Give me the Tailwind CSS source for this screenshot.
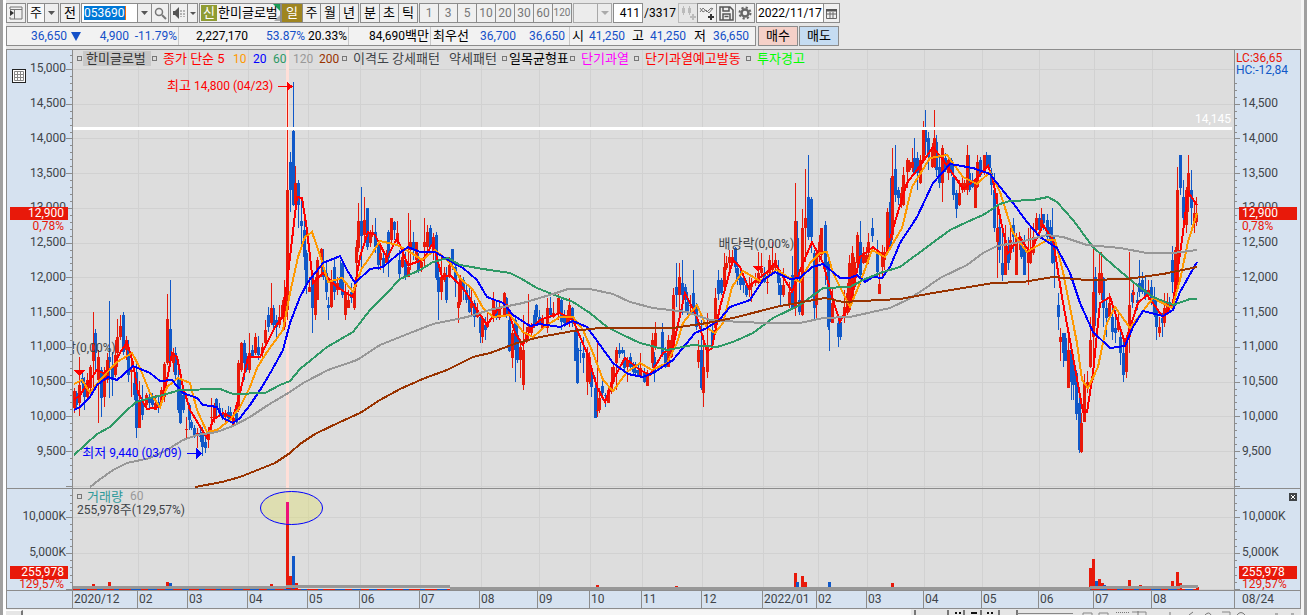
<!DOCTYPE html>
<html lang="ko">
<head>
<meta charset="utf-8">
<title>한미글로벌 차트</title>
<script src="https://cdn.jsdelivr.net/npm/@tailwindcss/browser@4"></script>
</head>
<body class="flex h-screen flex-col overflow-hidden border-l-3 border-r-3 border-[#a0a0a0] bg-[#e6e6e6] font-['Roboto','Noto_Sans_CJK_KR',sans-serif] text-[12px] leading-[18px] text-black">
<div class="flex min-h-0 flex-1 flex-col border-x-3 border-white border-r-[#f4f4f4]">

<!-- toolbar -->
<div class="mt-[3px] flex h-5 shrink-0 items-stretch whitespace-nowrap">
  <button aria-label="패널" class="mr-px flex w-[20px] items-center justify-center border border-[#8c8c8c] bg-[#f0f0f0]"><svg width="14" height="14" viewBox="0 0 14 14"><path d="M1 3V1h12v12H1v-2M1 3.500h12M5.500 4v9" fill="none" stroke="#777"/><path d="M1 4l4 3-4 3z" fill="#333"/></svg></button>
  <label class="mr-px flex w-[32px] border border-[#8c8c8c] bg-[#f8f8f8]"><select aria-label="종목 구분" class="w-4 appearance-none pl-[2px] text-[13px] leading-[18px]"><option>주</option></select><span class="flex flex-1 items-center justify-center border-l border-[#8c8c8c] bg-[#eee]"><svg width="7" height="4"><path d="M0 0h7L3.500 4z" fill="#555"/></svg></span></label>
  <button class="mr-px w-[20px] border border-[#8c8c8c] bg-[#f0f0f0] text-[13px]">전</button>
  <label class="flex w-[71px] border border-[#8c8c8c] bg-white"><span class="flex flex-1 items-center pl-[2px]"><input aria-label="종목코드" value="053690" class="h-[14px] w-[42px] border-r border-orange-500 bg-[#0078d7] text-white"></span><span class="flex w-[14px] items-center justify-center border-l border-[#8c8c8c] bg-[#eee]"><svg width="7" height="4"><path d="M0 0h7L3.500 4z" fill="#555"/></svg></span></label>
  <button aria-label="검색" class="mr-px flex w-[17px] items-center justify-center border border-l-0 border-[#8c8c8c] bg-[#f0f0f0]"><svg width="13" height="13" viewBox="0 0 13 13"><circle cx="5" cy="5" r="3.500" fill="none" stroke="#777" stroke-width="1.500"/><path d="M8 8l4 4" stroke="#777" stroke-width="2"/></svg></button>
  <button aria-label="소리" class="flex w-[18px] items-center justify-center border border-[#8c8c8c] bg-[#f0f0f0]"><svg width="14" height="12" viewBox="0 0 14 12"><path d="M1 4h2l4-4v12L3 8H1z" fill="#555"/><path d="M9 3v7M12 3v7" stroke="#777" stroke-dasharray="2 1"/></svg></button>
  <button aria-label="소리 메뉴" class="mr-px flex w-[10px] items-center justify-center border-y border-r border-[#8c8c8c] bg-[#f0f0f0]"><svg width="6" height="3"><path d="M0 0h6L3 3z" fill="#555"/></svg></button>
  <div class="flex w-[82px] items-center overflow-hidden border border-[#8c8c8c] bg-[#f2f2f2]"><span class="ml-px flex h-[16px] w-4 items-center justify-center bg-[#8f9c33] text-[13px] text-white">신</span><span class="relative flex-1 pl-px text-[13px]"><svg class="absolute right-0 top-0" width="7" height="17"><path d="M0 0h7v7z" fill="#1a9c55"/><path d="M7 11v6H1z" fill="#aaa"/></svg><span class="relative">한미글로벌</span></span></div>
  <div class="mr-px flex border border-[#8c8c8c] bg-[#f0f0f0] text-[13px]"><button class="w-[20px] bg-[#9f8520] text-white">일</button><button class="w-[18px] border-l border-[#8c8c8c]">주</button><button class="w-[19px] border-l border-[#8c8c8c]">월</button><button class="w-[19px] border-l border-[#8c8c8c]">년</button></div>
  <div class="mr-px flex border border-[#8c8c8c] bg-[#f0f0f0] text-[13px]"><button class="w-[18px]">분</button><button class="w-[19px] border-l border-[#8c8c8c]">초</button><button class="w-[19px] border-l border-[#8c8c8c]">틱</button></div>
  <div class="mr-px flex border border-[#8c8c8c] bg-[#f0f0f0] text-[#777]"><button class="w-[18px]">1</button><button class="w-[19px] border-l border-[#8c8c8c]">3</button><button class="w-[19px] border-l border-[#8c8c8c]">5</button><button class="w-[19px] border-l border-[#8c8c8c]">10</button><button class="w-[19px] border-l border-[#8c8c8c]">20</button><button class="w-[19px] border-l border-[#8c8c8c]">30</button><button class="w-[19px] border-l border-[#8c8c8c]">60</button><button class="w-[19px] border-l border-[#8c8c8c] text-[10px]">120</button></div>
  <label class="mr-px flex w-[39px] border border-[#a8a8a8] bg-[#ececec]"><select aria-label="분 선택" disabled class="min-w-0 flex-1 appearance-none"><option></option></select><span class="flex w-[14px] items-center justify-center border-l border-[#a8a8a8]"><svg width="8" height="4"><path d="M0 0h8L4 4z" fill="#aaa"/></svg></span></label>
  <input aria-label="표시 개수" value="411" class="w-[30px] border border-[#8c8c8c] bg-white pr-[2px] text-right">
  <span class="flex w-[35px] items-center pl-px">/3317</span>
  <button aria-label="봉 추가" disabled class="flex w-[19px] items-center justify-center border border-r-0 border-[#bbb]"><svg width="16" height="16" viewBox="0 0 16 16"><path d="M3.500 1v9M9.500 1v9" stroke="#bbb"/><path d="M2 3h3v5H2zM8 3h3v5H8z" fill="#bbb"/><path d="M13 9v6M10 12h6" stroke="#bbb" stroke-width="2"/></svg></button>
  <button aria-label="지표 추가" class="flex w-[19px] items-center justify-center border border-r-0 border-[#8c8c8c] bg-[#f0f0f0]"><svg width="16" height="16" viewBox="0 0 16 16"><path d="M1 7l3-4 4 4 4-4 2 1M1 3l3 4 3-2 3 3 4-5" fill="none" stroke="#777"/><path d="M12 9v6M9 12h6" stroke="#333" stroke-width="2"/></svg></button>
  <button aria-label="저장" class="flex w-[19px] items-center justify-center border border-r-0 border-[#8c8c8c] bg-[#f0f0f0]"><svg width="15" height="15" viewBox="0 0 15 15"><path d="M1 1h10l3 3v10H1zM4 1v4h6V1M4 14V8h7v6M5.500 10.500h4" fill="none" stroke="#555" stroke-width="1.500"/></svg></button>
  <button aria-label="설정" class="mr-px flex w-[20px] items-center justify-center border border-[#8c8c8c] bg-[#f0f0f0]"><svg width="14" height="14" viewBox="0 0 14 14"><circle cx="7" cy="7" r="3.500" fill="none" stroke="#666" stroke-width="2.500"/><circle cx="7" cy="7" r="5.500" fill="none" stroke="#666" stroke-width="2" stroke-dasharray="2.200 2.120"/></svg></button>
  <label class="flex w-[84px] border border-[#8c8c8c] bg-white"><input aria-label="날짜" value="2022/11/17" class="w-[66px] min-w-0 pl-px"><span class="flex flex-1 items-center justify-center border-l border-[#8c8c8c] bg-[#f0f0f0]"><svg width="11" height="11" viewBox="0 0 11 11"><path d="M.5 1.500h10v9H.5zM.5 6h10M4 4v6M7 4v6" fill="none" stroke="#666"/><path d="M0 1h11v2.500H0z" fill="#555"/></svg></span></label>
</div>

<!-- quote row -->
<div class="mt-[3px] flex h-5 shrink-0 whitespace-nowrap text-[#1450c8]">
  <dl class="flex w-[750px] items-center border border-[#8c8c8c] bg-[#f2f2f2]">
    <dd class="w-[60px] text-right">36,650</dd><dd class="flex w-[17px] justify-center"><svg width="10" height="9"><path d="M0 0h10L5 9z" fill="#1450c8"/></svg></dd><dd class="w-[45px] text-right">4,900</dd><dd class="h-full w-[50px] border-r border-[#c8c8c8] pr-px text-right">-11.79%</dd>
    <dd class="w-[69px] text-right text-black">2,227,170</dd><dd class="w-[57px] text-right">53.87%</dd><dd class="h-full w-[44px] border-r border-[#c8c8c8] pr-px text-right text-black">20.33%</dd>
    <dd class="h-full w-[82px] border-r border-[#c8c8c8] pr-px text-right text-black">84,690<span class="text-[13px]">백만</span></dd>
    <dt class="w-[42px] pl-[2px] text-[13px] text-black">최우선</dt><dd class="w-[43px] text-right">36,700</dd><dd class="h-full w-[54px] border-r border-[#c8c8c8] pr-[4px] text-right">36,650</dd>
    <dt class="w-[19px] pl-[2px] text-[13px] text-black">시</dt><dd class="w-[40px]">41,250</dd><dt class="w-[20px] pl-[3px] text-[13px] text-black">고</dt><dd class="w-[40px] pl-px">41,250</dd><dt class="w-[20px] pl-[5px] text-[13px] text-black">저</dt><dd class="flex-1 pr-[6px] text-right">36,650</dd>
  </dl>
  <button class="ml-[2px] w-10 border border-[#8c8c8c] bg-[#f5d0c8] text-[13px] text-black">매수</button>
  <button class="ml-px w-10 border border-[#8c8c8c] bg-[#c5dcf2] text-[13px] text-black">매도</button>
</div>

<!-- chart -->
<main class="mt-[3px] grid min-h-0 flex-1 grid-cols-[66px_1fr_66px] grid-rows-[1fr_18px] border border-[#8c8c8c] bg-[#d6e2f0] text-[#404448]">
  <div class="relative grid min-h-0 grid-rows-[438fr_102fr] border-r border-[#8c8c8c]">
    <svg class="absolute inset-0 h-full w-full" viewBox="7 50 65 540" preserveAspectRatio="none"><path id="ticksL" stroke="#8c8c8c" fill="none"/></svg>
    <div id="priceL" class="flex flex-col items-end pb-[20px] pr-[6px] pt-px"></div>
    <div class="flex flex-col items-end border-t border-[#8c8c8c] pb-[20px] pr-[6px] pt-[9px]"><span class="flex flex-1 items-center">10,000K</span><span class="flex flex-1 items-center">5,000K</span></div>
    <button aria-label="표 보기" class="absolute left-[5px] top-[19px] flex size-[14px] items-center justify-center border border-[#222] bg-white"><svg width="10" height="10"><path d="M.5.500h9v9h-9zM.5 3.500h9M.5 6.500h9M3.500 0v10M6.500 0v10" fill="none" stroke="#888"/></svg></button>
    <div class="absolute left-[3px] top-[29.100%] h-[13px] w-[58px] bg-[#e8190a] pr-[4px] text-right leading-[13px] text-white">12,900</div>
    <div class="absolute right-[8px] top-[31.300%] leading-[14px] text-[#e8190a]">0,78%</div>
    <div class="absolute left-[3px] top-[95.500%] h-[13px] w-[58px] bg-[#e8190a] pr-[4px] text-right leading-[13px] text-white">255,978</div>
    <div class="absolute bottom-0 right-[8px] leading-[12px] text-[#e8190a]">129,57%</div>
  </div>

  <div class="relative min-h-0 overflow-hidden bg-[#dddddd]">
    <svg id="plot" class="absolute inset-0 h-full w-full" viewBox="73 50 1161 540" preserveAspectRatio="none" shape-rendering="crispEdges" fill="none">
      <path id="grid" stroke="#d1d1d1"/>
      <path d="M287.500 50V590" stroke="#ffdfd8" stroke-width="3"/>
      <path d="M73 488.500H1234" stroke="#8c8c8c"/>
      <g id="candles"></g>
      <g id="averages" stroke-width="2"></g>
      <path d="M73 128.500H1232" stroke="#fff" stroke-width="3"/>
      <g id="volume"></g>
      <path d="M73 587.500H286M300 586H450M450 588H960M960 588.500H1090" stroke="#979797" stroke-width="3"/>
      <path d="M286 586.500H320M1090 587H1180L1198 586" stroke="#979797" stroke-width="3"/>
      <ellipse cx="291.500" cy="508" rx="31" ry="16.500" fill="#e0e070" fill-opacity=".4" stroke="#0000ff" shape-rendering="auto"/>
      <path d="M287.500 502V524" stroke="#ee1177" stroke-width="3"/>
      <path d="M278 86.500H288" stroke="#f00"/>
      <path d="M287 82l6 4.500-6 4.500zM74 370h11l-5.500 6zM753 266h10l-5 6z" fill="#f00"/>
      <path d="M187 453.500H197" stroke="#00f"/><path d="M196 448l6 5.500-6 5.500z" fill="#00f"/>
    </svg>
    <div class="relative flex h-[17px] items-center whitespace-nowrap pl-[4px] leading-[16px] *:shrink-0">
      <i class="size-[5px] border border-[#777]"></i><span class="ml-px w-[68px] bg-[#c8c8c8] px-[3px] text-[13px] leading-[15px] text-[#333]">한미글로벌</span>
      <i class="ml-px size-[5px] border border-[#777]"></i><span class="ml-[6px] w-[70px] text-[13px] text-[#f00]">종가 단순 5</span><span class="w-[20px] text-[#ff9900]">10</span><span class="w-[20px] text-[#00f]">20</span><span class="w-[20px] text-[#2e9965]">60</span><span class="w-[26px] text-[#999]">120</span><span class="w-[23px] text-[#993300]">200</span>
      <i class="size-[5px] border border-[#777]"></i><span class="ml-[6px] w-[39px] text-[13px]">이격도</span><span class="w-[57px] text-[13px]">강세패턴</span><span class="w-[53px] text-[13px]">약세패턴</span>
      <i class="size-[5px] border border-[#777]"></i><span class="ml-[2px] w-[61px] text-[13px] text-black">일목균형표</span>
      <i class="size-[5px] border border-[#777]"></i><span class="ml-[6px] w-[53px] text-[13px] text-[#f0f]">단기과열</span>
      <i class="size-[5px] border border-[#777]"></i><span class="ml-[6px] w-[101px] text-[13px] text-[#f00]">단기과열예고발동</span>
      <i class="size-[5px] border border-[#777]"></i><span class="ml-[6px] text-[13px] text-[#0f0]">투자경고</span>
    </div>
    <div class="absolute left-[8.100%] top-[5%] whitespace-nowrap text-[#f00]"><span class="text-[13px]">최고</span> 14,800 (04/23)</div>
    <div class="absolute left-[0.800%] top-[73%] whitespace-nowrap text-[#00f]"><span class="text-[13px]">최저</span> 9,440 (03/09)</div>
    <div class="absolute -left-[9px] top-[53.500%] whitespace-nowrap"><span class="text-[13px]">락</span>(0,00%)</div>
    <div class="absolute left-[55.600%] top-[34.200%] whitespace-nowrap"><span class="text-[13px]">배당락</span>(0,00%)</div>
    <div class="absolute right-[3px] top-[11.200%] text-white">14,145</div>
    <div class="absolute left-[4px] top-[81.500%] whitespace-nowrap leading-[13px]"><div class="flex items-center gap-[5px]"><i class="size-[5px] border border-[#777]"></i><span class="text-[13px] text-[#2e9999]">거래량</span><span class="ml-[2px] text-[#999]">60</span></div><div>255,978<span class="text-[13px]">주</span>(129,57%)</div></div>
  </div>

  <div class="relative grid min-h-0 grid-rows-[438fr_102fr] border-l border-[#8c8c8c]">
    <svg class="absolute inset-0 h-full w-full" viewBox="1235 50 65 540" preserveAspectRatio="none"><path id="ticksR" stroke="#8c8c8c" fill="none"/></svg>
    <div id="priceR" class="flex flex-col items-start pb-[20px] pl-[7px] pt-px"></div>
    <div class="flex flex-col items-start border-t border-[#8c8c8c] pb-[20px] pl-[7px] pt-[9px]"><span class="flex flex-1 items-center">10,000K</span><span class="flex flex-1 items-center">5,000K</span></div>
    <div class="absolute left-px top-[2px] whitespace-nowrap leading-[12px] text-[#e8190a]">LC:36,65<br><span class="text-[#1058c8]">HC:-12,84</span></div>
    <div class="absolute right-[3px] top-[29.100%] h-[13px] w-[58px] bg-[#e8190a] pl-[3px] leading-[13px] text-white">12,900</div>
    <div class="absolute left-[7px] top-[31.300%] leading-[14px] text-[#e8190a]">0,78%</div>
    <div class="absolute right-[3px] top-[95.500%] h-[13px] w-[58px] bg-[#e8190a] pl-[3px] leading-[13px] text-white">255,978</div>
    <div class="absolute bottom-0 left-[7px] leading-[12px] text-[#e8190a]">129,57%</div>
    <button aria-label="닫기" class="absolute right-[3px] top-[82%] flex size-[8px] items-center justify-center bg-[#404448]"><svg width="6" height="6"><path d="M1 1l4 4M5 1L1 5" stroke="#fff"/></svg></button>
  </div>

  <div class="border-r border-t border-[#8c8c8c]"></div>
  <div class="grid grid-cols-[65fr_50fr_60fr_60fr_52fr_60fr_60fr_58fr_52fr_52fr_60fr_61fr_54fr_50fr_57fr_58fr_57fr_55fr_58fr_82fr] divide-x divide-[#8c8c8c] border-t border-[#8c8c8c] leading-[17px] *:whitespace-nowrap *:pl-px">
    <span>2020/12</span><span>02</span><span>03</span><span>04</span><span>05</span><span>06</span><span>07</span><span>08</span><span>09</span><span>10</span><span>11</span><span>12</span><span>2022/01</span><span>02</span><span>03</span><span>04</span><span>05</span><span>06</span><span>07</span><span>08</span>
  </div>
  <div class="border-l border-t border-[#8c8c8c] pl-[7px] leading-[17px]">08/24</div>
</main>

<!-- top edge of the scroll and tool bar -->
<footer class="flex h-[6px] shrink-0 items-end overflow-hidden bg-[#f0f0f0]">
  <div class="h-[5px] w-[17px] border-r-2 border-t border-[#777] border-t-white bg-[#e6e6e6]"></div>
  <div class="h-[5px] flex-1 bg-[#f6f6f6]"></div>
  <svg class="shrink-0" width="390" height="6" viewBox="910 609 390 6"><path d="M910 609h390v6H910z" fill="#e6e6e6"/><path d="M914 610v5M947 610v5M963 610v5M980 610v5M998 610v5M1016 610v5" stroke="#777" stroke-width="2"/><path d="M954 613h2M958 613h2M970 613h6M986 613h2M990 613h2" stroke="#111" stroke-width="2"/><path d="M1016 613.500h56" stroke="#888"/><path d="M1082 615v-2h9v2M1098 615v-2h9v2M1131 612h14v3M1221 612h8v3" fill="none" stroke="#888"/><path d="M1115 612.500h13" stroke="#777" stroke-dasharray="1 1"/><path d="M1137 611v4M1169 612v3M1188 615l4-3M1204 615q4-4 6 0M1236 615q4-5 8 0M1274 614h3M1290 614h3" fill="none" stroke="#777"/></svg>
</footer>
</div>

<script>
const NS = 'http://www.w3.org/2000/svg';
const byId = id => document.getElementById(id);
function path(parent, d, stroke, width) {
  const p = document.createElementNS(NS, 'path');
  p.setAttribute('d', d); p.setAttribute('stroke', stroke); p.setAttribute('stroke-width', width);
  byId(parent).appendChild(p);
}
// axis labels
for (let p = 15000; p >= 9500; p -= 500) {
  for (const side of ['priceL', 'priceR']) {
    const s = document.createElement('span');
    s.className = 'flex flex-1 items-center';
    s.textContent = side === 'priceR' && p === 15000 ? '' : p.toLocaleString('en-US');
    byId(side).appendChild(s);
  }
}
// ticks and grid
let left = '', right = '', grid = '';
for (let i = -2; i <= 60; i++) {
  const y = Math.round(69 + i * 6.946) + .5, major = i % 5 === 0;
  left += `M${major ? 66 : 70} ${y}H72`;
  if (i > 1) right += `M1235 ${y}H${major ? 1240 : 1237}`;
  if (major) grid += `M73 ${y}H1234`;
}
for (let i = 0; i <= 13; i++) {
  const y = Math.round(589 - i * 7.2) + .5, major = i % 5 === 0;
  left += `M${major ? 66 : 70} ${y}H72`;
  right += `M1235 ${y}H${major ? 1240 : 1237}`;
  if (major) grid += `M73 ${y}H1234`;
}
for (const x of [138,188,248,308,360,420,481,539,590,642,702,763,818,867,924,982,1039,1094,1152]) grid += `M${x}.5 50V590`;
byId('ticksL').setAttribute('d', left);
byId('ticksR').setAttribute('d', right);
byId('grid').setAttribute('d', grid);

// x, high, body top, body bottom, low
const up = `74 388 391 408 413|79 357 385 403 416|87 373 380 397 400|90 365 367 388 392|93 312 343 361 387|98 350 357 380 423|104 367 373 397 407|107 353 360 380 383|115 340 355 375 377|117 319 337 353 367|120 315 326 337 340|126 336 340 350 360|131 360 370 372 397|139 381 400 428 428|146 393 395 405 410|155 395 403 410 410|161 387 390 403 405|164 362 364 397 402|167 294 319 363 365|173 348 353 363 372|186 417 429 430 438|197 428 433 434 448|208 427 433 440 448|211 398 417 418 433|214 403 407 418 423|225 410 413 417 422|233 413 418 425 425|238 360 363 410 412|241 342 343 370 372|249 333 353 370 373|255 333 337 353 355|262 343 347 353 357|265 320 330 343 345|271 283 308 323 325|279 305 317 325 328|282 300 305 317 318|284 280 297 327 330|287 86 190 310 320|295 166 183 204 215|309 277 287 292 292|315 277 283 315 320|317 257 260 300 300|321 248 249 260 277|331 270 282 307 308|337 277 283 290 295|345 283 293 315 320|348 290 300 308 308|354 280 287 308 310|356 240 247 263 287|358 203 221 248 252|364 197 220 235 243|370 230 232 243 247|372 225 232 233 237|380 247 253 260 270|386 250 257 263 265|391 218 218 240 243|397 221 233 242 245|402 253 257 267 268|408 213 267 277 277|410 220 242 250 270|416 242 242 260 263|421 258 262 268 272|424 218 242 247 267|427 225 232 247 250|433 233 237 252 260|441 257 277 292 300|444 267 273 280 282|449 257 265 277 278|458 283 302 308 323|460 275 278 302 305|471 290 303 308 317|477 303 310 317 318|482 317 320 337 343|487 313 322 327 328|493 292 300 317 322|499 300 307 318 320|504 292 293 315 317|512 330 333 358 368|520 340 347 360 378|523 315 350 385 390|526 327 333 342 343|528 294 327 332 340|531 323 327 333 337|542 315 320 328 330|547 298 308 328 333|553 302 313 317 318|558 294 298 313 320|567 310 317 323 323|569 298 305 320 327|587 347 353 382 395|589 352 357 382 384|597 342 410 411 417|599 388 398 410 413|608 388 390 403 403|611 367 382 392 394|613 363 367 382 384|616 347 350 363 390|627 357 360 367 382|640 353 368 377 378|647 370 373 386 386|652 333 340 363 368|655 322 333 347 350|668 335 340 367 367|671 335 340 357 358|673 288 295 350 352|679 263 277 295 322|690 295 305 306 312|698 340 350 362 368|703 335 367 393 407|707 313 347 372 378|715 288 298 328 330|724 253 267 287 290|726 256 263 268 270|729 250 257 263 270|732 250 257 263 266|749 277 285 290 297|751 278 283 287 302|755 273 280 283 286|758 252 273 283 284|761 253 268 273 275|767 270 282 283 294|769 255 260 273 275|772 242 265 270 272|775 253 260 268 270|783 268 285 295 297|789 282 292 305 308|795 183 221 307 316|802 209 228 315 316|805 169 218 228 262|816 250 253 305 320|819 235 242 255 262|821 228 228 255 260|832 287 303 323 323|844 290 307 317 323|847 283 293 313 315|849 255 263 310 312|852 246 253 302 304|854 257 262 287 290|857 232 235 263 265|863 247 253 263 264|866 247 255 263 268|868 233 242 253 264|879 273 284 294 294|882 245 252 267 278|884 247 253 260 270|887 208 212 250 255|892 148 176 235 240|901 187 193 205 208|903 167 175 205 206|907 158 160 172 188|909 160 162 170 172|912 148 162 168 172|920 155 160 183 184|923 121 130 160 163|932 143 150 167 168|934 110 138 167 168|942 145 148 183 202|948 155 160 173 180|959 180 193 205 206|962 178 183 190 193|964 180 183 190 192|967 145 155 190 195|975 178 183 208 208|977 155 162 187 188|984 155 155 172 175|997 193 228 242 278|1005 225 240 275 275|1010 227 240 253 260|1016 233 238 275 275|1019 232 237 243 250|1028 228 253 263 285|1030 228 250 263 264|1033 223 237 253 255|1036 213 218 230 232|1041 208 220 227 230|1060 328 337 342 361|1068 335 350 388 388|1081 413 423 452 453|1084 374 383 422 422|1087 371 382 387 393|1090 317 340 367 368|1093 249 292 337 380|1099 253 273 293 295|1101 252 273 293 300|1109 293 303 317 320|1118 313 322 330 332|1126 337 343 372 378|1129 252 305 337 353|1133 282 292 295 303|1148 280 290 295 300|1159 317 327 333 337|1164 293 308 323 327|1167 293 303 313 315|1175 247 250 290 300|1177 167 190 288 290|1186 187 190 225 233|1188 155 173 197 212|1194 202 213 223 233|1196 197 213 222 226`;
const down = `76 391 393 405 410|82 370 378 383 393|84 377 383 397 410|95 329 333 353 373|101 367 370 398 417|109 301 357 362 398|112 352 367 380 396|123 312 315 352 355|128 340 347 375 382|134 367 383 395 400|136 360 372 428 438|142 385 400 415 420|149 392 397 403 408|152 393 398 405 408|158 397 402 408 413|170 280 329 361 362|175 347 353 375 380|178 365 378 410 413|180 377 393 423 424|183 387 395 410 413|189 403 405 420 430|191 420 422 428 430|194 425 428 435 438|200 425 433 437 442|202 427 432 447 456|205 435 442 448 453|216 398 399 410 417|219 403 408 413 417|222 408 413 418 420|228 406 412 418 422|230 407 412 420 423|236 407 413 422 425|244 340 343 363 380|246 353 357 370 372|252 345 350 357 358|258 336 347 355 360|268 307 315 327 332|273 305 308 325 328|276 315 320 327 340|290 152 162 190 212|293 82 131 205 206|298 180 183 205 228|301 200 221 226 247|304 217 230 257 270|306 250 253 285 294|312 270 277 308 333|323 249 267 277 280|326 263 273 292 300|328 297 305 308 320|334 257 267 292 300|340 260 277 287 290|342 262 263 295 298|351 283 292 298 303|361 187 221 236 267|367 208 208 247 250|375 218 232 247 253|378 240 243 265 270|383 252 258 267 273|388 230 232 258 277|394 221 222 230 240|399 250 260 274 278|405 252 260 277 280|413 232 242 250 260|418 253 260 270 273|430 225 228 247 248|436 232 235 278 280|438 267 277 292 320|446 267 275 300 303|452 249 249 263 270|455 262 267 282 297|463 277 280 290 300|466 283 290 300 303|469 288 297 312 313|474 300 303 317 327|480 313 317 333 343|485 317 325 330 340|496 302 307 318 320|506 297 298 315 318|509 317 320 351 352|515 315 320 350 382|517 323 335 360 363|534 310 315 325 328|536 304 305 317 322|539 310 317 323 325|550 297 308 315 318|561 298 300 322 330|564 310 315 323 327|572 307 308 323 327|575 320 330 361 361|577 332 348 383 384|580 342 350 351 363|583 337 353 358 373|591 370 375 387 397|595 377 388 418 418|602 380 386 393 400|605 393 395 396 407|619 343 350 354 358|622 347 350 353 354|624 350 358 368 370|630 353 357 367 368|633 362 365 372 374|635 362 370 373 375|638 365 370 375 376|644 368 373 382 383|654 352 357 373 382|662 323 332 355 357|665 347 353 367 368|676 263 287 295 307|682 260 283 295 315|685 284 287 300 313|687 292 302 312 315|693 270 293 313 315|696 303 308 327 330|701 320 350 388 390|712 322 330 345 348|718 270 280 294 300|721 278 280 293 295|735 247 248 267 273|737 262 268 280 285|740 270 277 285 290|743 273 278 285 293|746 280 285 295 297|764 267 273 282 283|778 260 270 283 295|780 278 285 295 305|792 256 275 308 309|797 221 238 277 280|799 273 300 312 315|808 155 197 237 240|811 197 199 237 253|814 250 253 308 320|825 221 225 270 285|828 255 262 327 330|829 273 287 322 351|838 320 323 337 347|840 317 322 337 340|860 221 242 275 285|872 218 228 236 242|877 240 250 272 278|890 178 202 247 249|895 145 169 195 202|898 187 190 198 205|914 138 158 173 175|917 152 158 173 190|925 110 130 142 155|928 132 138 157 170|936 135 142 170 177|939 157 167 183 188|945 153 158 170 172|951 158 160 173 176|953 163 177 195 200|956 190 193 209 218|969 155 173 190 192|972 173 180 187 188|980 157 160 175 177|986 152 155 167 169|989 155 155 168 175|991 168 173 185 195|994 173 190 228 232|999 217 227 250 263|1002 233 263 275 281|1008 237 253 263 270|1013 218 225 237 252|1021 237 240 257 259|1024 235 247 275 275|1039 214 218 230 232|1043 214 214 223 230|1047 214 220 237 240|1050 220 227 240 243|1052 208 237 263 264|1054 237 243 258 288|1058 293 305 317 330|1063 333 333 353 367|1065 333 338 361 361|1071 343 350 382 400|1073 363 371 385 400|1076 370 373 414 420|1079 397 403 450 453|1095 267 277 313 326|1103 277 278 308 327|1106 300 308 318 337|1112 307 317 332 340|1115 310 328 333 343|1120 327 337 353 365|1123 340 353 375 382|1132 290 293 302 308|1137 292 300 303 310|1139 260 283 292 297|1142 272 280 292 294|1145 277 290 297 300|1151 280 287 303 305|1154 287 297 313 317|1156 300 310 327 340|1162 313 318 323 337|1169 297 302 307 313|1172 246 260 282 293|1180 155 155 188 195|1183 180 197 218 223|1191 170 190 208 225`;
for (const [data, color] of [[down, '#1058c8'], [up, '#e8190a']]) {
  let wick = '', body = '';
  for (const c of data.split('|')) {
    const [x, h, t, b, l] = c.split(' ').map(Number);
    wick += `M${x}.5 ${h}V${l}`;
    body += `M${x}.5 ${t}V${Math.max(b, t + 1)}`;
  }
  path('candles', wick, color, 1);
  path('candles', body, color, 3);
}

const averages = {
  '#ff0000': `74,400 80,395 90,380 97,370 103,373 113,367 120,353 127,342 133,363 138,393 147,409 160,407 167,380 172,353 177,357 183,387 190,410 207,438 213,420 223,413 233,418 240,393 248,357 260,357 275,327 283,317 290,257 297,197 302,198 307,230 313,283 323,273 337,287 353,297 360,257 368,232 375,235 387,258 397,238 408,265 423,260 433,243 442,277 450,275 463,288 475,307 487,325 497,310 507,305 515,333 523,345 530,330 540,320 560,313 573,320 587,353 597,387 605,402 613,380 625,358 640,370 650,375 663,353 673,347 685,293 697,317 707,352 712,348 720,307 733,260 740,267 748,287 767,272 775,263 792,292 803,263 812,242 823,263 833,300 840,322 850,303 860,257 873,247 885,257 897,215 907,183 917,170 933,147 943,160 955,177 963,189 975,180 988,166 993,180 1000,217 1008,253 1020,237 1030,253 1043,225 1053,240 1062,297 1073,357 1083,412 1087,412 1093,373 1100,303 1110,297 1125,343 1138,303 1147,295 1163,317 1173,303 1182,240 1188,192 1197,205`,
  '#ff9900': `74,384 82,380 90,393 100,380 117,362 132,353 140,368 150,393 160,407 167,387 178,378 190,383 197,410 207,432 217,430 230,420 240,407 250,387 257,368 267,352 283,330 290,293 298,257 305,237 312,232 320,255 328,282 342,278 353,292 362,268 368,260 380,241 397,245 410,252 422,260 435,250 450,263 460,278 473,290 483,308 493,317 510,315 523,332 533,337 547,325 560,317 573,317 583,330 593,353 603,380 613,391 627,372 640,363 652,370 667,363 677,343 683,323 697,305 707,328 715,333 723,323 732,287 743,271 760,281 777,270 788,277 800,282 810,263 820,253 827,252 833,273 850,307 860,283 872,250 885,257 902,228 912,187 930,158 947,155 963,177 977,184 990,172 1000,192 1013,233 1027,252 1047,240 1055,240 1063,272 1077,343 1082,380 1088,388 1098,367 1107,323 1115,307 1130,328 1143,311 1153,298 1172,308 1180,280 1188,242 1197,213`,
  '#0000ff': `74,410 80,407 90,397 97,385 108,377 117,380 123,375 133,366 150,373 160,381 172,380 183,393 197,398 203,405 217,407 223,418 233,423 240,418 250,405 262,387 272,370 283,350 290,323 300,297 308,282 323,263 340,256 347,270 355,283 370,269 383,267 397,255 408,247 420,252 435,252 450,261 463,268 477,280 487,297 503,303 513,315 530,326 540,324 560,327 573,321 587,327 600,345 613,363 628,374 643,377 653,373 673,360 695,333 707,328 720,319 730,307 750,300 763,280 775,272 790,279 800,278 812,267 823,264 840,278 850,278 857,275 865,282 873,277 882,278 890,267 900,243 917,217 933,183 950,164 973,168 990,174 1000,187 1013,203 1027,222 1040,237 1057,248 1070,273 1080,303 1093,332 1110,348 1125,346 1133,327 1143,311 1163,316 1173,310 1180,292 1197,262`,
  '#2e9965': `74,455 85,445 97,434 110,427 125,412 136,402 150,398 163,395 180,390 220,389 233,394 265,393 280,385 290,381 300,369 327,347 353,332 370,310 387,293 400,279 420,270 433,262 448,258 460,265 483,269 510,273 520,278 537,288 557,296 573,302 590,313 607,327 623,335 640,343 667,350 693,345 717,347 733,342 753,333 773,318 800,305 823,288 850,287 863,280 880,273 900,267 927,247 950,230 967,222 983,215 1000,204 1010,201 1033,200 1048,197 1057,202 1073,220 1093,247 1113,265 1133,282 1153,297 1173,305 1190,299 1197,299`,
  '#979797': `90,487 99,480 113,470 127,463 150,458 167,450 183,440 197,435 217,432 233,426 250,417 268,405 285,395 305,382 328,370 357,360 380,345 410,333 433,324 467,317 493,309 523,303 553,294 568,289 590,289 613,294 630,302 653,308 687,312 710,320 740,322 767,323 800,323 823,318 850,317 890,308 907,300 923,290 940,278 967,265 983,253 997,246 1020,242 1047,235 1063,237 1087,245 1120,248 1147,253 1173,253 1197,250`,
  '#993300': `195,487 222,482 240,477 255,471 275,463 290,453 300,444 315,434 340,422 360,413 380,400 400,389 425,378 447,370 473,357 490,353 517,343 540,337 573,331 600,328 673,328 707,323 733,318 780,306 825,298 843,302 900,299 933,293 993,283 1023,282 1053,277 1087,280 1127,279 1163,274 1197,267`
};
for (const [color, pts] of Object.entries(averages)) path('averages', 'M' + pts.replace(/ /g, 'L'), color, 2);

// volume bars: x, top
const volUp = '93 584|109 582|167 582|238 586|249 586|271 584|284 586|287 502|290 576|296 583|597 585|676 586|795 573|802 576|805 582|892 583|1090 568|1093 559|1099 579|1102 583|1129 580|1140 585|1172 581|1177 572|1180 583|1197 587';
const volDown = '170 583|293 556|797 582|829 582|1096 581|1104 585';
for (const [data, color] of [[volUp, '#e8190a'], [volDown, '#1058c8']])
  path('volume', data.split('|').map(v => { const [x, y] = v.split(' '); return `M${x}.5 ${y}V590`; }).join(''), color, 3);
path('volume', 'M73 589.500H1198', '#e8190a', 1);
let small = '';
for (let x = 80; x < 1195; x += 17) small += `M${x} 589.500h${5 + x * 7 % 6}`;
path('volume', small, '#1058c8', 1);
</script>
</body>
</html>
